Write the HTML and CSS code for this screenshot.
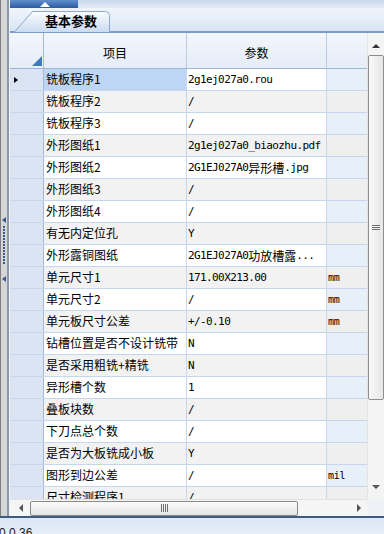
FILE: index.html
```html
<!DOCTYPE html>
<html>
<head>
<meta charset="utf-8">
<link rel="stylesheet" href="styles.css">
</head>
<body>
<div class="app">
  <div class="main">
    <div class="leftbar">
      <span class="grip-tri"></span>
      <span class="grip-dots"></span>
      <span class="grip-tri lower"></span>
    </div>
    <div class="panel">
      <div class="topstrip"><div class="navtab"><span class="tri-up"></span></div></div>
      <div class="tabrow">
        <div class="tab">
          <svg class="tabshape" width="96" height="21" viewBox="0 0 96 21">
            <defs>
              <linearGradient id="tg" x1="0" y1="0" x2="0" y2="1">
                <stop offset="0" stop-color="#fbfcfe"/>
                <stop offset="1" stop-color="#cbdcf2"/>
              </linearGradient>
            </defs>
            <path d="M0.5 21 L18.5 0.5 H91.5 Q95.5 0.5 95.5 4.5 V21" fill="url(#tg)" stroke="#8ea8cc" stroke-width="1"/>
          </svg>
          <span class="tab-label">基本参数</span>
        </div>
      </div>
      <div class="gridwrap">
        <div class="gridbody">
          <div class="gridview">
            <div class="hdr">
              <div class="c0 hc0"><span class="corner-tri"></span></div>
              <div class="c1 hc">项目</div>
              <div class="c2 hc">参数</div>
              <div class="c3 hc"></div>
            </div>
            <div class="row odd"><div class="c0"><span class="cur"></span></div><div class="c1 sel">铣板程序1</div><div class="c2 val">2g1ej027a0.rou</div><div class="c3 val"></div></div>
            <div class="row even"><div class="c0"></div><div class="c1">铣板程序2</div><div class="c2 val">/</div><div class="c3 val"></div></div>
            <div class="row odd"><div class="c0"></div><div class="c1">铣板程序3</div><div class="c2 val">/</div><div class="c3 val"></div></div>
            <div class="row even"><div class="c0"></div><div class="c1">外形图纸1</div><div class="c2 val">2g1ej027a0_biaozhu.pdf</div><div class="c3 val"></div></div>
            <div class="row odd"><div class="c0"></div><div class="c1">外形图纸2</div><div class="c2 val">2G1EJ027A0<span class="cn">异形槽</span>.jpg</div><div class="c3 val"></div></div>
            <div class="row even"><div class="c0"></div><div class="c1">外形图纸3</div><div class="c2 val">/</div><div class="c3 val"></div></div>
            <div class="row odd"><div class="c0"></div><div class="c1">外形图纸4</div><div class="c2 val">/</div><div class="c3 val"></div></div>
            <div class="row even"><div class="c0"></div><div class="c1">有无内定位孔</div><div class="c2 val">Y</div><div class="c3 val"></div></div>
            <div class="row odd"><div class="c0"></div><div class="c1">外形露铜图纸</div><div class="c2 val">2G1EJ027A0<span class="cn">功放槽露</span>...</div><div class="c3 val"></div></div>
            <div class="row even"><div class="c0"></div><div class="c1">单元尺寸1</div><div class="c2 val">171.00X213.00</div><div class="c3 val unit">mm</div></div>
            <div class="row odd"><div class="c0"></div><div class="c1">单元尺寸2</div><div class="c2 val">/</div><div class="c3 val unit">mm</div></div>
            <div class="row even"><div class="c0"></div><div class="c1">单元板尺寸公差</div><div class="c2 val">+/-0.10</div><div class="c3 val unit">mm</div></div>
            <div class="row odd"><div class="c0"></div><div class="c1">钻槽位置是否不设计铣带</div><div class="c2 val">N</div><div class="c3 val"></div></div>
            <div class="row even"><div class="c0"></div><div class="c1">是否采用粗铣+精铣</div><div class="c2 val">N</div><div class="c3 val"></div></div>
            <div class="row odd"><div class="c0"></div><div class="c1">异形槽个数</div><div class="c2 val">1</div><div class="c3 val"></div></div>
            <div class="row even"><div class="c0"></div><div class="c1">叠板块数</div><div class="c2 val">/</div><div class="c3 val"></div></div>
            <div class="row odd"><div class="c0"></div><div class="c1">下刀点总个数</div><div class="c2 val">/</div><div class="c3 val"></div></div>
            <div class="row even"><div class="c0"></div><div class="c1">是否为大板铣成小板</div><div class="c2 val">Y</div><div class="c3 val"></div></div>
            <div class="row odd"><div class="c0"></div><div class="c1">图形到边公差</div><div class="c2 val">/</div><div class="c3 val unit">mil</div></div>
            <div class="row even"><div class="c0"></div><div class="c1">尺寸检测程序1</div><div class="c2 val">/</div><div class="c3 val"></div></div>
          </div>
          <div class="vscroll">
            <div class="vbtn"><span class="arr-up"></span></div>
            <div class="vthumb"><span class="vgrip"></span></div>
            <div class="vspace"></div>
            <div class="vbtn down"><span class="arr-down"></span></div>
          </div>
        </div>
        <div class="hrow">
          <div class="hscroll">
            <div class="hbtn"><span class="arr-left"></span></div>
            <div class="hthumb"><span class="hgrip"></span></div>
            <div class="hspace"></div>
            <div class="hbtn right"><span class="arr-right"></span></div>
          </div>
          <div class="sc-corner"></div>
        </div>
      </div>
    </div>
  </div>
  <div class="status">0.0.36</div>
</div>
</body>
</html>
```
FILE: styles.css
```css
* { box-sizing: border-box; }
html, body { margin: 0; padding: 0; }
body {
  width: 384px;
  height: 534px;
  overflow: hidden;
  font-family: "Noto Sans CJK SC", "Liberation Sans", sans-serif;
  font-size: 12px;
  color: #000;
}
.app {
  display: flex;
  flex-direction: column;
  height: 534px;
  background: #dfe9f6;
}
.main {
  display: flex;
  flex: none;
  height: 518px;
  border-bottom: 2px solid #3f5a80;
}
.leftbar {
  width: 10px;
  flex: none;
  background: linear-gradient(to right, #7f7f7f 0 1px, #d6d6d6 1px 7px, #8d99ab 7px 9px, #eef2f7 9px 10px);
  display: flex;
  flex-direction: column;
  align-items: flex-start;
  padding-top: 217px;
  padding-left: 2px;
}
.grip-tri {
  width: 0;
  height: 0;
  border-right: 4px solid #3b5b8f;
  border-top: 3px solid transparent;
  border-bottom: 3px solid transparent;
}
.grip-tri.lower { margin-top: 12px; }
.grip-dots {
  margin-top: 3px;
  margin-left: 1px;
  width: 2px;
  height: 38px;
  background: repeating-linear-gradient(#3b5b8f 0 2px, transparent 2px 3px);
}
.panel {
  flex: 1;
  min-width: 0;
  display: flex;
  flex-direction: column;
}
.topstrip {
  height: 8px;
  flex: none;
  display: flex;
  background: linear-gradient(#cad8ec, #e2eaf6);
}
.navtab {
  width: 68px;
  height: 8px;
  background: linear-gradient(#6390cc, #2a5aa0);
  display: flex;
  justify-content: center;
  align-items: flex-end;
  padding-left: 1px;
}
.tri-up {
  width: 0;
  height: 0;
  border-left: 5px solid transparent;
  border-right: 5px solid transparent;
  border-bottom: 5px solid #fff;
  margin-bottom: 1px;
}
.tabrow {
  flex: none;
  height: 25px;
  padding-top: 3px;
  border-bottom: 2px solid #7b9bc9;
  background: linear-gradient(#f0f5fb, #d9e5f4);
  display: flex;
}
.tab {
  position: relative;
  margin-left: 4px;
  width: 96px;
  height: 20px;
  display: flex;
  align-items: center;
}
.tabshape {
  position: absolute;
  left: 0;
  top: 0;
}
.tab-label {
  position: relative;
  padding-left: 31px;
  font-weight: bold;
  font-size: 13px;
  line-height: 16px;
  letter-spacing: 0;
}
.gridwrap {
  flex: 1;
  display: flex;
  flex-direction: column;
  min-height: 0;
}
.gridbody {
  display: flex;
  height: 466px;
  flex: none;
}
.gridview {
  flex: 1;
  min-width: 0;
  overflow: hidden;
  background: #fff;
}
.hdr {
  display: flex;
  height: 36px;
  border-bottom: 1px solid #9fb4d3;
  background: linear-gradient(#f3f6fb, #e5edf8);
}
.row {
  display: flex;
  height: 22px;
  border-bottom: 1px solid #c6d6ec;
}
.c0 {
  width: 34px;
  flex: none;
  border-right: 1px solid #a6bad7;
  background: #dae4f2;
  display: flex;
  align-items: center;
}
.c1 {
  width: 143px;
  flex: none;
  border-right: 1px solid #c6d6ec;
  padding-left: 2px;
  display: flex;
  align-items: center;
  white-space: nowrap;
  padding-bottom: 2px;
}
.c2 {
  width: 140px;
  flex: none;
  border-right: 1px solid #c6d6ec;
  padding-left: 1px;
  display: flex;
  align-items: center;
  white-space: nowrap;
  overflow: hidden;
}
.c3 {
  flex: 1;
  display: flex;
  align-items: center;
  padding-left: 1px;
}
.hdr .c0, .hdr .c1, .hdr .c2, .hdr .c3 { background: transparent; }
.hdr .c1, .hdr .c2 { border-right-color: #bccbe1; }
.hc {
  justify-content: center;
  padding: 3px 0 0 0;
}
.hc0 {
  justify-content: flex-end;
  align-items: flex-end;
  padding: 0 1px 2px 0;
}
.corner-tri {
  width: 0;
  height: 0;
  border-left: 10px solid transparent;
  border-bottom: 10px solid #4177c9;
}
.cur {
  margin-left: 4px;
  width: 0;
  height: 0;
  border-left: 4px solid #000;
  border-top: 3.5px solid transparent;
  border-bottom: 3.5px solid transparent;
}
.row.even .c1, .row.even .c2 { background: #f2f2f2; }
.row.even .c3 { background: #efefef; }
.row.odd .c3 { background: #e7eff9; }
.row .c1.sel { background: #bcd6f3; }
.val {
  font-family: "DejaVu Sans Mono", "Liberation Mono", monospace;
  font-size: 11px;
  letter-spacing: -0.6px;
  padding-bottom: 1px;
}
.cn {
  font-family: "Noto Sans CJK SC", sans-serif;
  font-size: 12px;
  letter-spacing: 0;
}
.unit {
  font-size: 10px;
  letter-spacing: -0.3px;
}
.vscroll {
  width: 17px;
  flex: none;
  background: #f4f4f4;
  border-left: 1px solid #e4e4e4;
  display: flex;
  flex-direction: column;
  align-items: stretch;
}
.vbtn {
  height: 22px;
  display: flex;
  justify-content: center;
  align-items: center;
  padding-top: 3px;
}
.vbtn.down { height: 20px; padding-top: 0; padding-bottom: 4px; }
.arr-up {
  width: 0; height: 0;
  border-left: 4px solid transparent;
  border-right: 4px solid transparent;
  border-bottom: 4px solid #333;
}
.arr-down {
  width: 0; height: 0;
  border-left: 4px solid transparent;
  border-right: 4px solid transparent;
  border-top: 4px solid #555;
}
.vthumb {
  height: 345px;
  border: 1px solid #8e8e8e;
  border-radius: 2px;
  background: linear-gradient(to right, #f9f9f9, #e6e6e6);
  display: flex;
  justify-content: center;
  align-items: center;
}
.vgrip {
  width: 8px;
  height: 5px;
  background: repeating-linear-gradient(#707070 0 1px, transparent 1px 2px);
}
.vspace { flex: 1; }
.hrow {
  display: flex;
  height: 17px;
  flex: none;
}
.hscroll {
  flex: 1;
  display: flex;
  align-items: center;
  background: #f5f5f5;
  border-top: 1px solid #e2e2e2;
}
.hbtn {
  width: 19px;
  height: 100%;
  display: flex;
  justify-content: center;
  align-items: center;
  padding-left: 2px;
}
.hbtn.right { width: 17px; padding-left: 0; }
.arr-left {
  width: 0; height: 0;
  border-right: 4px solid #555;
  border-top: 4px solid transparent;
  border-bottom: 4px solid transparent;
}
.arr-right {
  width: 0; height: 0;
  border-left: 4px solid #555;
  border-top: 4px solid transparent;
  border-bottom: 4px solid transparent;
}
.hthumb {
  margin-left: 1px;
  width: 268px;
  height: 15px;
  border: 1px solid #8a8a8a;
  border-radius: 2px;
  background: linear-gradient(#fbfbfb, #e4e4e4);
  display: flex;
  justify-content: center;
  align-items: center;
}
.hgrip {
  width: 7px;
  height: 8px;
  background: repeating-linear-gradient(to right, #707070 0 1px, transparent 1px 2px);
}
.hspace { flex: 1; }
.sc-corner {
  width: 17px;
  flex: none;
  background: #eef1f5;
}
.status {
  flex: 1;
  padding-top: 8px;
  padding-left: 0;
  margin-left: -1px;
  font-family: "Liberation Sans", sans-serif;
  font-size: 12px;
  line-height: 14px;
  color: #222;
  background: linear-gradient(#dde8f5, #e9f0f9);
}
```
